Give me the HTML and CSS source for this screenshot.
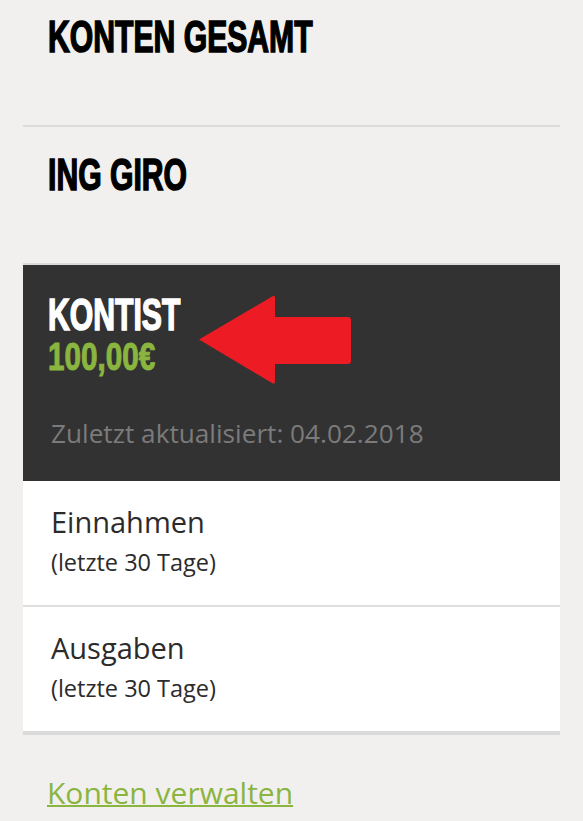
FILE: index.html
```html
<!DOCTYPE html>
<html lang="de">

<head>
  <meta charset="UTF-8">
  <meta name="viewport" content="width=device-width, initial-scale=1.0">
  <title>Konten</title>
  <link rel="stylesheet" href="styles.css">
</head>

<body>
  <div class="accounts">
    <div class="group">
      <h2 class="group-title">KONTEN GESAMT</h2>
    </div>

    <div class="group group-giro">
      <h2 class="group-title">ING GIRO</h2>
    </div>

    <div class="account-card">
      <div class="account-head">
        <div class="account-info">
          <div class="account-name">KONTIST</div>
          <div class="account-balance">100,00€</div>
        </div>
        <svg class="arrow" width="154" height="90" viewBox="0 0 154 90">
          <path d="M1 44.500 L75 1 Q77 0 77 3 L77 22 L150 22 Q153 22 153 25 L153 66 Q153 69 150 69 L77 69 L77 86 Q77 90 74 88 Z" fill="#ed1c24" />
        </svg>
      </div>
      <div class="account-updated">Zuletzt aktualisiert: 04.02.2018</div>
    </div>

    <div class="stat-row">
      <div class="stat-label">Einnahmen</div>
      <div class="stat-note">(letzte 30 Tage)</div>
    </div>
    <div class="stat-row stat-row-last">
      <div class="stat-label">Ausgaben</div>
      <div class="stat-note">(letzte 30 Tage)</div>
    </div>

    <a class="manage-link" href="#">Konten verwalten</a>
  </div>
</body>

</html>
```

FILE: styles.css
```css
* {
  margin: 0;
  padding: 0;
  box-sizing: border-box;
}

body {
  background-color: #f1f0ef;
  color: #2b2b2b;
  font-family: "Open Sans", "Noto Sans", sans-serif;
  height: 821px;
  overflow: hidden;
}

.accounts {
  margin: 0 23px;
}

.group {
  height: 127px;
  padding: 12px 0 0 25px;
  border-bottom: 2px solid #dcdbda;
}

.group-giro {
  height: 138px;
  padding-top: 23px;
}

/* no condensed face is installed, so the headings are squeezed */
.group-title,
.account-name,
.account-balance {
  font-family: "Liberation Sans", sans-serif;
  font-weight: bold;
  white-space: nowrap;
  transform-origin: left center;
}

.group-title {
  font-size: 45px;
  line-height: 50px;
  color: #000;
  -webkit-text-stroke: 1.6px #000;
  transform: scaleX(0.67);
}

.account-card {
  height: 216px;
  background-color: #323232;
  padding: 30px 0 0 25px;
}

.account-head {
  display: flex;
  align-items: flex-start;
}

.account-info {
  width: 150px;
}

.account-name {
  font-size: 45px;
  line-height: 40px;
  color: #fff;
  -webkit-text-stroke: 1.6px #fff;
  transform: scaleX(0.67);
}

.account-balance {
  margin-top: 2px;
  font-size: 38px;
  line-height: 40px;
  color: #8ab53f;
  -webkit-text-stroke: 1px #8ab53f;
  transform: scaleX(0.78);
}

.account-updated {
  margin-top: 32px;
  padding-left: 3px;
  font-size: 26.200px;
  line-height: 32px;
  white-space: nowrap;
  color: #7b7b7b;
}

.stat-row {
  height: 126px;
  background-color: #fff;
  padding: 21px 0 0 28px;
  border-bottom: 2px solid #dfdfdf;
}

.stat-row-last {
  height: 128px;
  border-bottom: 4px solid #dadada;
}

.stat-label {
  font-size: 29px;
  line-height: 40px;
  color: #2b2b2b;
}

.stat-note {
  font-size: 23.500px;
  line-height: 40px;
  color: #2b2b2b;
}

.manage-link {
  display: inline-block;
  margin: 38px 0 0 24px;
  font-size: 30px;
  line-height: 40px;
  color: #8ab53f;
  text-decoration: underline;
  text-decoration-thickness: 2px;
}
```
